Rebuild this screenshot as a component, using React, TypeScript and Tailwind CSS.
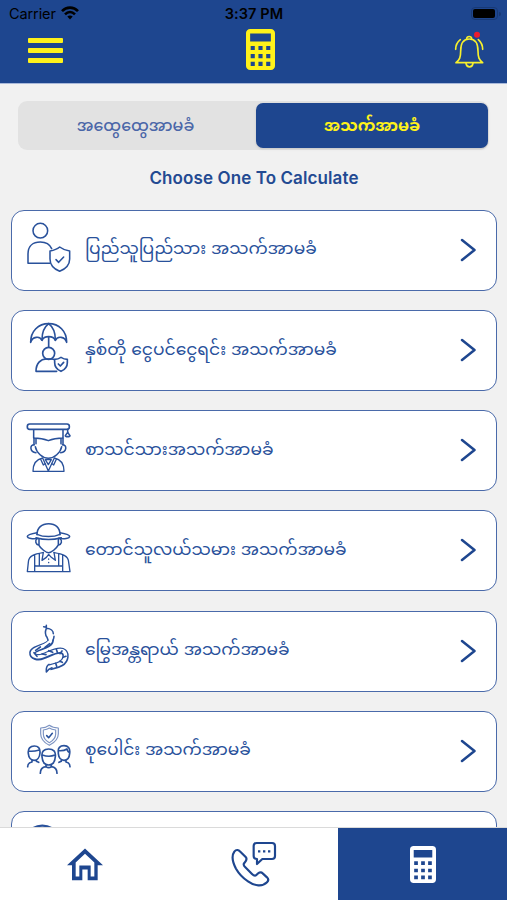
import React, { useState } from 'react';

interface Product {
  id: string;
  label: string;
  Icon: React.FC;
}

const CardIcon: React.FC<{ children: React.ReactNode }> = ({ children }) => (
  <svg
    viewBox="78 66 138 153"
    className="w-[46px] h-[51px] shrink-0"
    fill="none"
    stroke="#29519b"
    strokeWidth="4.6"
    strokeLinecap="round"
    strokeLinejoin="round"
  >
    {children}
  </svg>
);

const PersonShield: React.FC = () => (
  <CardIcon>
    <circle cx="121" cy="92" r="22" />
    <path d="M150 190H84V162c0-24 15-36 37-36 17 0 28 6 34 20" />
    <path d="M179 141c9 7 18 10 30 12v24c0 18-13 30-30 37-17-7-29-19-29-37v-24c12-2 21-5 29-12z" fill="#fff" />
    <path d="M168 179l8 8 15-16" />
  </CardIcon>
);

const UmbrellaPerson: React.FC = () => (
  <CardIcon>
    <g strokeWidth="5">
      <path d="M92 127c0-34 23-56 54-56s54 22 54 56c-5-18-28-20-34-6-6-15-34-15-40 0-6-14-29-12-34 6z" />
      <path d="M146 71c-13 10-20 27-20 48M146 71c13 10 20 27 20 48M146 111v31" />
      <circle cx="146" cy="160" r="18" />
      <path d="M170 214h-62c0-24 14-37 31-37h14c6 0 9 1 13 3" />
      <path d="M183 172c6 4 12 6 19 6v10c0 13-8 21-19 26-11-5-19-13-19-26v-10c7 0 13-2 19-6z" fill="#fff" />
      <path d="M175 192l6 6 10-11" />
    </g>
  </CardIcon>
);

const Student: React.FC = () => (
  <CardIcon>
    <rect x="82" y="72" width="126" height="16" rx="7" strokeWidth="5" />
    <path d="M101 89v25c14 0 30 2 44 8 14-6 30-8 44-8V89M203 88v10" />
    <path d="M203 97l-7 10c0 4 14 4 14 0z" />
    <path d="M106 140c3 18 22 35 39 35s37-17 40-35M102 115v19M108 117v14M183 117v14M189 115v19" />
    <path d="M103 134c-15 0-14 22 5 24M187 134c15 0 14 22-5 24" />
    <path d="M128 174c-20 4-29 16-29 40h93c0-24-9-36-29-40M128 174l17 39 18-39M122 178l8 17 6-5M169 178l-8 17-6-5M136 179h18l-9 15z" strokeWidth="4" />
  </CardIcon>
);

const Farmer: React.FC = () => (
  <CardIcon>
    <path d="M111 104c0-20 14-33 35-33s34 13 34 33" />
    <path d="M111 98c-12 2-29 6-29 11 0 7 17 9 34 6M180 98c12 2 29 6 29 11 0 7-17 9-34 6M111 103c20 9 49 9 69 0M108 113c24 7 51 7 76 0" />
    <path d="M111 116c-7 6-4 18 6 20 4 8 20 22 29 22s24-14 28-22c11-2 14-14 6-20M117 116v20M175 116v20" />
    <path d="M129 158c-24 4-43 8-44 29l-3 28h128l-4-28c-1-21-20-25-44-29M104 166v48M118 162v36h58v-36M188 166v48M106 198h80" strokeWidth="4" />
    <path d="M130 157l-4 24 13-9 7-9 8 9 12 9-4-24M146 177v1M146 187v1" strokeWidth="4" />
  </CardIcon>
);

const Snake: React.FC = () => (
  <CardIcon>
    {/* body: wide stroke hollowed out by a narrower white one */}
    <path d="M152 116c2 22-52 22-55 39-1 13 17 17 32 11 17-6 42-22 58-16 15 6 12 28-4 38-10 6-24 8-34 11" strokeWidth="19" strokeLinecap="butt" />
    <path d="M152 113c3 24-52 25-55 42-1 11 17 16 31 10 17-6 43-22 59-16 15 6 12 28-4 38-10 6-24 8-36 12" strokeWidth="10" stroke="#fff" strokeLinecap="butt" />
    <path d="M147 190c-9 5-9 14-8 23 5-8 10-11 17-13" />
    <path d="M131 77l8 2M139 73v8M139 82c-5 12-4 19 2 27l3 8M141 82c11 1 19 8 19 16M162 106c0 5-1 8-3 12" />
    <path d="M149 128l-14 11M121 138l-14 10M102 155l9 11M126 159l12 2M146 149l12 5M169 145l3 9M186 150l-6 8M198 166l-9 3M187 184l-8-3M167 187l3 9" strokeWidth="5" />
  </CardIcon>
);

const Group: React.FC = () => (
  <CardIcon>
    <g stroke="#7c93c2" strokeWidth="3.5">
      <path d="M148 73c8 6 17 8 27 8v17c0 17-12 27-27 35-15-8-26-18-26-35V81c10 0 18-2 26-8z" />
      <path d="M148 81c6 4 12 5 19 6v12c0 12-8 20-19 26-11-6-18-14-18-26V87c7-1 12-2 18-6z" />
    </g>
    <path d="M140 104l6 6 11-13" />
    <g strokeWidth="5">
      <path d="M85 158c-2-16 6-23 18-23 11 0 18 6 17 21-1 14-9 22-18 22s-16-8-17-20zM86 150c11 2 21 0 32-3M96 177v6c-9 2-13 6-13 14M109 177v4l7 3" />
      <path d="M175 154c-2-13 5-20 17-20s19 7 17 23c-1 14-8 21-17 21s-16-8-17-20zM175 149c13 1 20-1 26-5 1 7 4 9 8 11M184 177v4l-7 3M198 177v6c9 2 12 6 12 14" />
      <path d="M126 167c-2-16 6-23 20-23s22 7 20 23c-1 16-9 25-20 25s-19-9-20-25zM127 162c14 5 26 5 38 0M138 190v7c-11 1-17 6-17 20M154 190v7c11 1 17 6 17 20M138 197c5 4 11 4 16 0" />
    </g>
  </CardIcon>
);

const Partial: React.FC = () => (
  <CardIcon>
    <ellipse cx="127" cy="98" rx="38" ry="24" strokeWidth="7" />
  </CardIcon>
);

const PRODUCTS: Product[] = [
  { id: 'public', label: 'ပြည်သူပြည်သား အသက်အာမခံ', Icon: PersonShield },
  { id: 'short-term', label: 'နှစ်တို ငွေပင်ငွေရင်း အသက်အာမခံ', Icon: UmbrellaPerson },
  { id: 'student', label: 'စာသင်သားအသက်အာမခံ', Icon: Student },
  { id: 'farmer', label: 'တောင်သူလယ်သမား အသက်အာမခံ', Icon: Farmer },
  { id: 'snake', label: 'မြွေအန္တရာယ် အသက်အာမခံ', Icon: Snake },
  { id: 'group', label: 'စုပေါင်း အသက်အာမခံ', Icon: Group },
  { id: 'other', label: '', Icon: Partial },
];

const Calculator: React.FC<{ className: string }> = ({ className }) => (
  <svg viewBox="0 0 28 40" className={className} fill="currentColor" preserveAspectRatio="none">
    <path
      fillRule="evenodd"
      d="M4 0h20a4 4 0 0 1 4 4v32a4 4 0 0 1-4 4H4a4 4 0 0 1-4-4V4a4 4 0 0 1 4-4zM4 4.300v8h20v-8zM4.500 16.500v4h4v-4zM12 16.500v4h4v-4zM19.500 16.500v4h4v-4zM4.500 24.500v4h4v-4zM12 24.500v4h4v-4zM19.500 24.500v4h4v-4zM4.500 32v4h4v-4zM12 32v4h4v-4zM19.500 32v4h4v-4z"
    />
  </svg>
);

const Header: React.FC = () => (
  <header className="h-[84px] shrink-0 bg-[#1e468f] border-b border-[#a9b9da]">
    {/* Status bar */}
    <div className="h-7 grid grid-cols-3 items-center pl-[9px] pr-[6px] text-black text-[15px]">
      <div className="flex items-center gap-[5px]">
        <span className="text-[14.5px] tracking-[-0.1px]">Carrier</span>
        <svg viewBox="0 0 18 14" className="w-[18px] h-[14px] -mt-[2px]" fill="none" stroke="#000" strokeWidth="2.600">
          <path d="M1 5.200c4.500-4.800 11.500-4.800 16 0M4 8.300c3-3 7-3 10 0" />
          <path d="M6.300 10.500c1.600-1.500 3.800-1.500 5.400 0L9 13.500z" fill="#000" stroke="none" />
        </svg>
      </div>
      <span className="-ml-[2px] text-center text-[14.5px] font-semibold tracking-[0.1px] whitespace-nowrap">3:37 PM</span>
      <div className="flex justify-end items-center gap-px -mt-px">
        <div className="w-[27px] h-[13px] rounded-[4px] border border-[#183975] p-px">
          <div className="w-[22px] h-full rounded-[2px] bg-black" />
        </div>
        <div className="w-[2px] h-1 rounded-r bg-[#183975]" />
      </div>
    </div>

    <div className="grid grid-cols-3 items-center px-[18px] h-[44px]">
      <button className="justify-self-start ml-[10px] mt-px flex flex-col gap-[4.500px]">
        <span className="block w-[35px] h-[5.500px] rounded-[1px] bg-[#fff21a]" />
        <span className="block w-[35px] h-[5.500px] rounded-[1px] bg-[#fff21a]" />
        <span className="block w-[35px] h-[5.500px] rounded-[1px] bg-[#fff21a]" />
      </button>
      <Calculator className="w-[29px] h-[41px] justify-self-center -mt-px ml-[13px] text-[#fff21a]" />
      <button className="justify-self-end mr-[5px]">
        <svg viewBox="599 93 90 114" className="w-[30px] h-[38px]" fill="none" stroke="#f7f02c" strokeWidth="5" strokeLinecap="round" strokeLinejoin="round">
          <path d="M605 188c11-9 14-16 14-35 0-23 7-36 26-36s26 13 26 36c0 19 3 26 14 35z" />
          <path d="M637 117c-1-10 16-10 15 0M635 190c2 14 19 14 21 0M604 148c0-12 4-21 14-29M685 148c0-12-4-21-13-29" />
          <circle cx="668" cy="104" r="9" fill="#ec1c2d" stroke="none" />
        </svg>
      </button>
    </div>
  </header>
);

const ProductCard: React.FC<{ product: Product }> = ({ product }) => {
  const { Icon, label } = product;
  return (
    <button className="flex items-start w-full h-[81px] shrink-0 rounded-[13px] border-[1.5px] border-[#4a6aaa] bg-white pl-[14px] pr-[20px] pt-[11px] text-left">
      <Icon />
      {label && (
        <>
          <span className="ml-[13px] h-[51px] pt-px flex items-center text-[17.1px] leading-none whitespace-nowrap text-[#29519b]">
            {label}
          </span>
          <svg viewBox="0 0 16 24" className="ml-auto mt-[16px] w-4 h-6" fill="none" stroke="#1e468f" strokeWidth="2.500" strokeLinecap="round" strokeLinejoin="round">
            <path d="M2 2l12.500 10L2 22" />
          </svg>
        </>
      )}
    </button>
  );
};

const BottomNav: React.FC = () => (
  <nav className="h-[73px] shrink-0 grid grid-cols-3 bg-white border-t border-[#dadada]">
    <button className="flex items-center justify-center">
      <svg viewBox="201 143 108 98" className="w-9 h-[33px]" fill="#1e468f">
        <path fillRule="evenodd" d="M255 144l54 50h-16v45h-30v-32h-16v32h-31v-45h-15zM255 160l-28 26v42h11v-33h34v33h11v-42z" />
      </svg>
    </button>
    <button className="flex items-center justify-center">
      <svg viewBox="693 124 138 138" className="w-[46px] h-[46px]" fill="none" stroke="#1e468f" strokeWidth="6.5" strokeLinejoin="round">
        <path d="M703 156c6-8 13-5 18 0l16 16c7 8 0 13-5 19-3 5 0 8 4 12l20 20c5 5 9 7 13 3 6-6 13-12 19-5l13 12c5 5 5 10 0 15-14 14-37 11-57-3-15-10-28-24-36-38-9-17-15-37-5-51z" />
        <path d="M770 130h46c6 0 9 3 9 9v30c0 6-3 9-9 9h-29l-16 15v-15c-6 0-10-3-10-9v-30c0-6 3-9 9-9z" />
        <path d="M774 155h7M789 155h7M804 155h7" />
      </svg>
    </button>
    <button className="flex items-center justify-center bg-[#1e468f] text-white">
      <Calculator className="w-[26px] h-[37px]" />
    </button>
  </nav>
);

export default function App() {
  const [tab, setTab] = useState<'general' | 'life'>('life');

  const tabClass = (active: boolean) =>
    `flex items-center justify-center rounded-[7px] text-[15.9px] leading-none ${
      active ? 'bg-[#1e468f] text-[#fff21a] font-bold shadow-sm' : 'pr-[5px] text-[#4a66a8] font-medium'
    }`;

  return (
    <div className="w-[507px] h-[900px] flex flex-col overflow-hidden bg-[#f1f1f1] font-['Inter','Noto_Sans_Myanmar','Noto_Sans',sans-serif]">
      <Header />

      <main className="flex-1 min-h-0 overflow-hidden pl-[11px] pr-[10px]">
        <div className="mt-[17px] ml-[7px] mr-[8px] h-[49px] grid grid-cols-[236px_1fr] rounded-[9px] bg-[#e2e2e2] p-[2px] pr-px">
          <button className={tabClass(tab === 'general')} onClick={() => setTab('general')}>
            အထွေထွေအာမခံ
          </button>
          <button className={tabClass(tab === 'life')} onClick={() => setTab('life')}>
            အသက်အာမခံ
          </button>
        </div>

        <h1 className="mt-[16px] h-6 text-center text-[17px] leading-6 font-semibold tracking-[0.1px] text-[#234a92]">
          Choose One To Calculate
        </h1>

        <div className="mt-[20px] flex flex-col gap-[19.15px]">
          {PRODUCTS.map((product) => (
            <ProductCard key={product.id} product={product} />
          ))}
        </div>
      </main>

      <BottomNav />
    </div>
  );
}
